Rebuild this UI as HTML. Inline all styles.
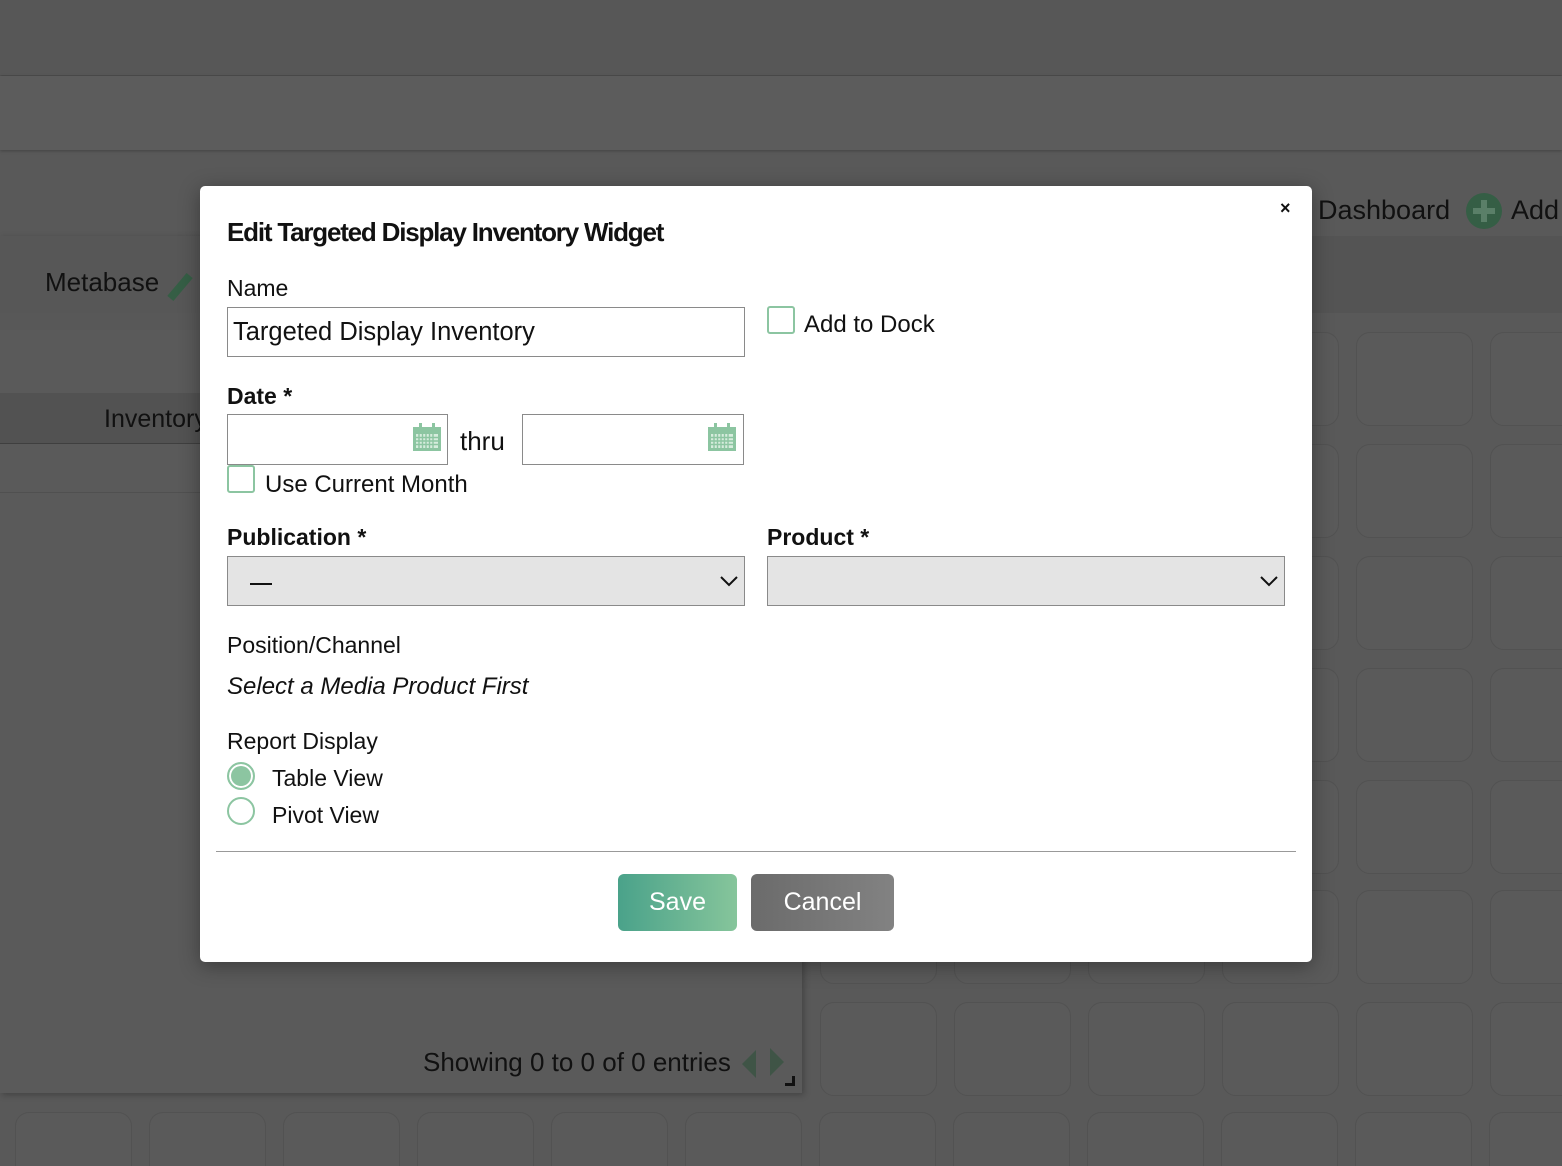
<!DOCTYPE html>
<html style="overflow:hidden;width:1562px;height:1166px"><head><meta charset="utf-8"><style>
*{box-sizing:border-box;margin:0;padding:0}
body{width:1562px;height:1166px;position:relative;overflow:hidden;background:#595959;font-family:"Liberation Sans",sans-serif;color:#111}
.abs{position:absolute}
.tile{position:absolute;width:117px;height:94px;border:1px solid #525252;border-radius:14px;background:#5a5a5a}
.dlg{position:absolute;left:200px;top:186px;width:1112px;height:776px;background:#fff;border-radius:5px;box-shadow:0 4px 20px rgba(0,0,0,.35)}
.t{position:absolute;font-size:23px;white-space:nowrap;color:#111}
.b{font-weight:bold}
.inp{position:absolute;border:1px solid #8a8a8a;background:#fff}
.cb{position:absolute;width:28px;height:28px;border:2px solid #8cc5a1;border-radius:3px}
.sel{position:absolute;height:50px;background:#e4e4e4;border:1px solid #8a8a8a}
</style></head><body>
<div class="abs" style="left:0;top:0;width:1562px;height:75px;background:#575757;box-shadow:0 1px 3px rgba(0,0,0,.25)"></div>
<div class="abs" style="left:0;top:76px;width:1562px;height:74px;background:#5c5c5c;box-shadow:0 1px 3px rgba(0,0,0,.25)"></div>
<div class="abs" style="left:0;top:236px;width:1562px;height:77px;background:#545454"></div>
<div class="abs" style="left:1318px;top:195px;font-size:27px;color:#111">Dashboard</div>
<div class="abs" style="left:1466px;top:193px;width:36px;height:36px;border-radius:50%;background:#355e45"></div>
<div class="abs" style="left:1481px;top:200px;width:6px;height:22px;background:#5a7f68"></div>
<div class="abs" style="left:1473px;top:208px;width:22px;height:6px;background:#5a7f68"></div>
<div class="abs" style="left:1511px;top:195px;font-size:27px;color:#111">Add</div>
<div id="tiles"></div>
<div class="abs" style="left:0;top:236px;width:802px;height:857px;background:#5a5a5a;box-shadow:2px 2px 6px rgba(0,0,0,.25)">
 <div class="abs" style="left:0;top:0;width:802px;height:77px;background:#575757"></div>
 <div class="abs" style="left:45px;top:31px;font-size:26px">Metabase</div>
 <div class="abs" style="left:176px;top:36px;width:8px;height:30px;background:#355e45;transform:rotate(40deg)"></div>
 <div class="abs" style="left:0;top:77px;width:802px;height:17px;background:#585858"></div>
 <div class="abs" style="left:0;top:157px;width:802px;height:51px;background:#525252;border-bottom:1px solid #3f3f3f"></div>
 <div class="abs" style="left:104px;top:169px;font-size:25px">Inventory</div>
 <div class="abs" style="left:0;top:256px;width:802px;height:1px;background:#505050"></div>
 <div class="abs" style="left:423px;top:811px;font-size:26px">Showing 0 to 0 of 0 entries</div>
 <div class="abs" style="left:742px;top:814px;width:0;height:0;border-top:14px solid transparent;border-bottom:14px solid transparent;border-right:14px solid #3f5446"></div>
 <div class="abs" style="left:770px;top:812px;width:0;height:0;border-top:14px solid transparent;border-bottom:14px solid transparent;border-left:14px solid #3f5446"></div>
 <div class="abs" style="left:785px;top:840px;width:10px;height:10px;border-right:3px solid #111;border-bottom:3px solid #111"></div>
</div>
<div class="dlg">
 <div class="t b" style="left:27px;top:31px;font-size:26px;letter-spacing:-1.2px">Edit Targeted Display Inventory Widget</div>
 <div class="t b" style="left:1080px;top:12px;font-size:18px">×</div>
 <div class="t" style="left:27px;top:89px">Name</div>
 <div class="inp" style="left:27px;top:121px;width:518px;height:50px"></div>
 <div class="t" style="left:33px;top:132px;font-size:25.5px">Targeted Display Inventory</div>
 <div class="cb" style="left:567px;top:120px"></div>
 <div class="t" style="left:604px;top:125px;font-size:24px">Add to Dock</div>
 <div class="t b" style="left:27px;top:197px">Date *</div>
 <div class="inp" style="left:27px;top:228px;width:221px;height:51px"></div>
 <div class="inp" style="left:322px;top:228px;width:222px;height:51px"></div>
 <svg class="abs" style="left:212px;top:236px" width="30" height="30" viewBox="0 0 30 30"><rect x="1" y="5" width="28" height="24" fill="#8cc5a1"/><rect x="7" y="1" width="3" height="7" fill="#8cc5a1"/><rect x="20" y="1" width="3" height="7" fill="#8cc5a1"/><rect x="4" y="12" width="22" height="14" fill="#d6ecdd"/><g stroke="#8cc5a1" stroke-width="1.4"><path d="M7 12v14M10.5 12v14M14 12v14M17.5 12v14M21 12v14M4 15.5h22M4 19h22M4 22.5h22"/></g></svg>
 <svg class="abs" style="left:507px;top:236px" width="30" height="30" viewBox="0 0 30 30"><rect x="1" y="5" width="28" height="24" fill="#8cc5a1"/><rect x="7" y="1" width="3" height="7" fill="#8cc5a1"/><rect x="20" y="1" width="3" height="7" fill="#8cc5a1"/><rect x="4" y="12" width="22" height="14" fill="#d6ecdd"/><g stroke="#8cc5a1" stroke-width="1.4"><path d="M7 12v14M10.5 12v14M14 12v14M17.5 12v14M21 12v14M4 15.5h22M4 19h22M4 22.5h22"/></g></svg>
 <div class="t" style="left:260px;top:240px;font-size:26px">thru</div>
 <div class="cb" style="left:27px;top:279px"></div>
 <div class="t" style="left:65px;top:285px;font-size:24px">Use Current Month</div>
 <div class="t b" style="left:27px;top:338px">Publication *</div>
 <div class="t b" style="left:567px;top:338px">Product *</div>
 <div class="sel" style="left:27px;top:370px;width:518px"></div>
 <div class="abs" style="left:50px;top:397px;width:22px;height:2px;background:#111"></div>
 <svg class="abs" style="left:519px;top:388px" width="20" height="14"><path d="M2 3l8 8 8-8" stroke="#111" stroke-width="2" fill="none"/></svg>
 <div class="sel" style="left:567px;top:370px;width:518px"></div>
 <svg class="abs" style="left:1059px;top:388px" width="20" height="14"><path d="M2 3l8 8 8-8" stroke="#111" stroke-width="2" fill="none"/></svg>
 <div class="t" style="left:27px;top:446px">Position/Channel</div>
 <div class="t" style="left:27px;top:487px;font-style:italic;font-size:24px">Select a Media Product First</div>
 <div class="t" style="left:27px;top:542px">Report Display</div>
 <div class="abs" style="left:27px;top:576px;width:28px;height:28px;border-radius:50%;border:2px solid #8cc5a1;background:#8cc5a1;box-shadow:inset 0 0 0 2px #fff"></div>
 <div class="t" style="left:72px;top:579px">Table View</div>
 <div class="abs" style="left:27px;top:611px;width:28px;height:28px;border-radius:50%;border:2px solid #8cc5a1"></div>
 <div class="t" style="left:72px;top:616px">Pivot View</div>
 <div class="abs" style="left:16px;top:665px;width:1080px;height:1px;background:#999"></div>
 <div class="abs" style="left:418px;top:688px;width:119px;height:57px;border-radius:6px;background:linear-gradient(90deg,#4aa28a,#86c59b);color:#fff;font-size:25px;text-align:center;line-height:57px">Save</div>
 <div class="abs" style="left:551px;top:688px;width:143px;height:57px;border-radius:6px;background:linear-gradient(90deg,#6b6b6b,#828282);color:#fff;font-size:25px;text-align:center;line-height:57px">Cancel</div>
</div>
<script>
var h='';var rows=[332,444,556,668,780,890,1002];
for(var r=0;r<rows.length;r++)for(var c=0;c<6;c++)h+='<div class="tile" style="left:'+(820+134*c)+'px;top:'+rows[r]+'px"></div>';
for(var c=0;c<12;c++)h+='<div class="tile" style="left:'+(15+134*c)+'px;top:1112px;height:54px;border-bottom:none;border-radius:14px 14px 0 0"></div>';
document.getElementById('tiles').innerHTML=h;
</script>
</body></html>
